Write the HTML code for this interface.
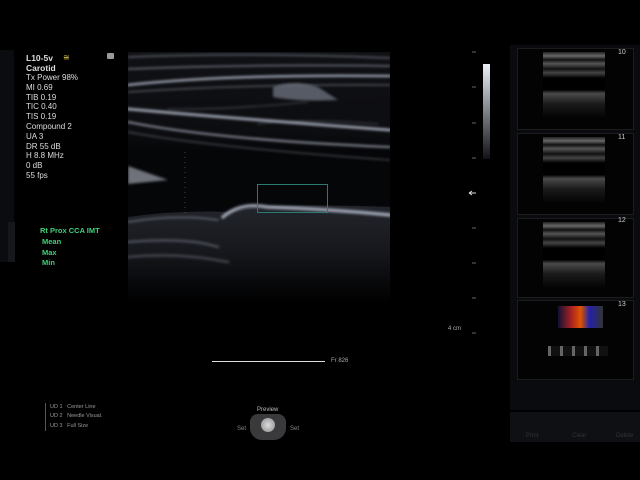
<!DOCTYPE html>
<html><head><style>
body{margin:0;background:#000;width:640px;height:480px;overflow:hidden;position:relative;font-family:"Liberation Sans",sans-serif}
.t{position:absolute;color:#ddd;font-size:8px;line-height:9.8px}
.g{position:absolute;color:#3fd17a;font-size:7.5px;font-weight:bold;line-height:10.5px}
.th{position:absolute;left:25px;top:3px;width:62px;height:65px;background:linear-gradient(#222 0,#666 6%,#111 12%,#555 18%,#111 26%,#444 32%,#000 40%,#000 58%,#4a4a4a 64%,#1a1a1a 80%,#050505)}
</style></head><body>
<div style="position:absolute;left:0;top:50px;width:14px;height:212px;background:#0b0c0f"></div>
<div style="position:absolute;left:8px;top:222px;width:7px;height:40px;background:#16171b"></div>
<div class="t" style="left:26px;top:53px;font-weight:bold;font-size:8.5px;line-height:10px">L10-5v<br>Carotid</div>
<div style="position:absolute;left:63px;top:53px;color:#e6d24a;font-size:8px">≅</div>
<div style="position:absolute;left:107px;top:53px;width:7px;height:6px;background:#999;border-radius:1px"></div>
<div class="t" style="left:26px;top:73px">Tx Power 98%<br>MI 0.69<br>TIB 0.19<br>TIC 0.40<br>TIS 0.19<br>Compound 2<br>UA 3<br>DR 55 dB<br>H 8.8 MHz<br>0 dB<br>55 fps</div>
<div class="g" style="left:40px;top:226px">Rt Prox CCA IMT</div>
<div class="g" style="left:42px;top:237px">Mean<br>Max<br>Min</div>
<svg style="position:absolute;left:128px;top:52px" width="262" height="250">
<defs><filter id="b"><feGaussianBlur stdDeviation="1.3"/></filter>
<linearGradient id="lg" x1="0" y1="0" x2="0" y2="1"><stop offset="0" stop-color="#23252c"/><stop offset=".5" stop-color="#15171c"/><stop offset="1" stop-color="#000"/></linearGradient>
<linearGradient id="tg" x1="0" y1="0" x2="0" y2="1"><stop offset="0" stop-color="#101115"/><stop offset=".8" stop-color="#0c0d10"/><stop offset="1" stop-color="#050608"/></linearGradient></defs>
<rect width="262" height="250" fill="#050608"/>
<rect x="0" y="0" width="262" height="100" fill="url(#tg)"/>
<path d="M0 165 Q50 158 100 160 Q130 150 262 155 L262 250 L0 250Z" fill="url(#lg)"/>
<g filter="url(#b)" stroke="#aab0c0" fill="none" stroke-linecap="round">
<path d="M0 5 Q120 0 262 6" stroke-width="1.5" opacity=".5"/>
<path d="M0 17 Q120 12 262 14" stroke-width="1.5" opacity=".6"/>
<path d="M0 33 Q100 22 262 24" stroke-width="2.5" opacity=".85"/>
<path d="M0 40 Q120 32 262 33" stroke-width="1.2" opacity=".5"/>
<path d="M0 57 Q100 66 262 78" stroke-width="3" opacity=".85"/>
<path d="M0 70 Q90 88 262 95" stroke-width="2" opacity=".75"/>
<path d="M0 80 Q80 95 262 108" stroke-width="1.2" opacity=".4"/>
<path d="M40 57 Q100 58 180 50" stroke-width="1" opacity=".35"/>
<path d="M130 72 Q170 66 250 72" stroke-width="1" opacity=".35"/>
<path d="M95 165 Q112 150 140 155 Q200 157 262 163" stroke-width="3.5" opacity=".9"/>
<path d="M0 170 Q50 162 90 168" stroke-width="1.5" opacity=".5"/>
<path d="M0 190 Q60 185 90 195" stroke-width="2.5" opacity=".35"/>
<path d="M0 205 Q50 200 100 210" stroke-width="2.5" opacity=".3"/>
</g>
<path d="M145 35 Q165 27 190 35 L210 48 Q170 50 145 45Z" fill="#6a6e7a" filter="url(#b)" opacity=".8"/>
<path d="M0 114 L40 128 L0 132Z" fill="#8a8e98" filter="url(#b)" opacity=".8"/>
<rect x="129.5" y="132.5" width="70" height="28" fill="none" stroke="#2b7a72" stroke-width="1"/>
<line x1="57" y1="100" x2="57" y2="170" stroke="#444" stroke-dasharray="1 4"/>
</svg>
<div style="position:absolute;left:483px;top:64px;width:7px;height:95px;background:linear-gradient(#eef0f8,#101218)"></div>
<svg style="position:absolute;left:460px;top:50px" width="30" height="300">
<g stroke="#666"><line x1="12" y1="2" x2="16" y2="2"/><line x1="12" y1="37" x2="16" y2="37"/><line x1="12" y1="73" x2="16" y2="73"/><line x1="12" y1="108" x2="16" y2="108"/><line x1="12" y1="178" x2="16" y2="178"/><line x1="12" y1="213" x2="16" y2="213"/><line x1="12" y1="248" x2="16" y2="248"/><line x1="12" y1="283" x2="16" y2="283"/></g>
<path d="M9 143 H16 M9 143 l3 -2 M9 143 l3 2" stroke="#ddd" fill="none"/>
</svg>
<div class="t" style="left:448px;top:325px;font-size:6px;color:#aaa">4 cm</div>
<div style="position:absolute;left:212px;top:361px;width:113px;height:1px;background:#ddd"></div>
<div class="t" style="left:331px;top:357px;font-size:6px;color:#aaa">Fr 826</div>
<div style="position:absolute;left:45px;top:403px;width:1px;height:28px;background:#555"></div>
<div class="t" style="left:50px;top:403px;font-size:5.5px;line-height:9.3px;color:#999">UD 1&nbsp;&nbsp; Center Line<br>UD 2&nbsp;&nbsp; Needle Visual.<br>UD 3&nbsp;&nbsp; Full Size</div>
<div class="t" style="left:257px;top:406px;font-size:6px;color:#bbb">Preview</div>
<div style="position:absolute;left:250px;top:414px;width:36px;height:26px;background:#3a3a3c;border-radius:8px 8px 12px 12px"></div>
<div style="position:absolute;left:261px;top:418px;width:14px;height:14px;background:radial-gradient(#ddd,#888);border-radius:50%"></div>
<div class="t" style="left:237px;top:425px;font-size:6px;color:#888">Set</div>
<div class="t" style="left:290px;top:425px;font-size:6px;color:#888">Set</div>
<div style="position:absolute;left:510px;top:45px;width:130px;height:365px;background:#0a0b0e"></div>
<div style="position:absolute;left:510px;top:412px;width:130px;height:30px;background:#0f1013"></div>
<div class="t" style="left:526px;top:432px;font-size:6px;color:#333">Print</div>
<div class="t" style="left:572px;top:432px;font-size:6px;color:#333">Clear</div>
<div class="t" style="left:616px;top:432px;font-size:6px;color:#333">Delete</div>
<div style="position:absolute;left:517px;top:48px;width:115px;height:80px;background:#030304;border:1px solid #1c1c1f"><div class="th"></div></div>
<div style="position:absolute;left:517px;top:133px;width:115px;height:80px;background:#030304;border:1px solid #1c1c1f"><div class="th"></div></div>
<div style="position:absolute;left:517px;top:218px;width:115px;height:78px;background:#030304;border:1px solid #1c1c1f"><div class="th"></div></div>
<div style="position:absolute;left:517px;top:300px;width:115px;height:78px;background:#030304;border:1px solid #1c1c1f">
<div style="position:absolute;left:40px;top:5px;width:45px;height:22px;background:linear-gradient(90deg,#113 0,#a22 30%,#d50 50%,#22a 70%,#333)"></div>
<div style="position:absolute;left:30px;top:45px;width:60px;height:10px;background:repeating-linear-gradient(90deg,#666 0 3px,#111 3px 12px)"></div></div>
<div class="t" style="left:618px;top:48px;font-size:7px;color:#ccc">10</div>
<div class="t" style="left:618px;top:133px;font-size:7px;color:#ccc">11</div>
<div class="t" style="left:618px;top:216px;font-size:7px;color:#ccc">12</div>
<div class="t" style="left:618px;top:300px;font-size:7px;color:#ccc">13</div>
</body></html>
